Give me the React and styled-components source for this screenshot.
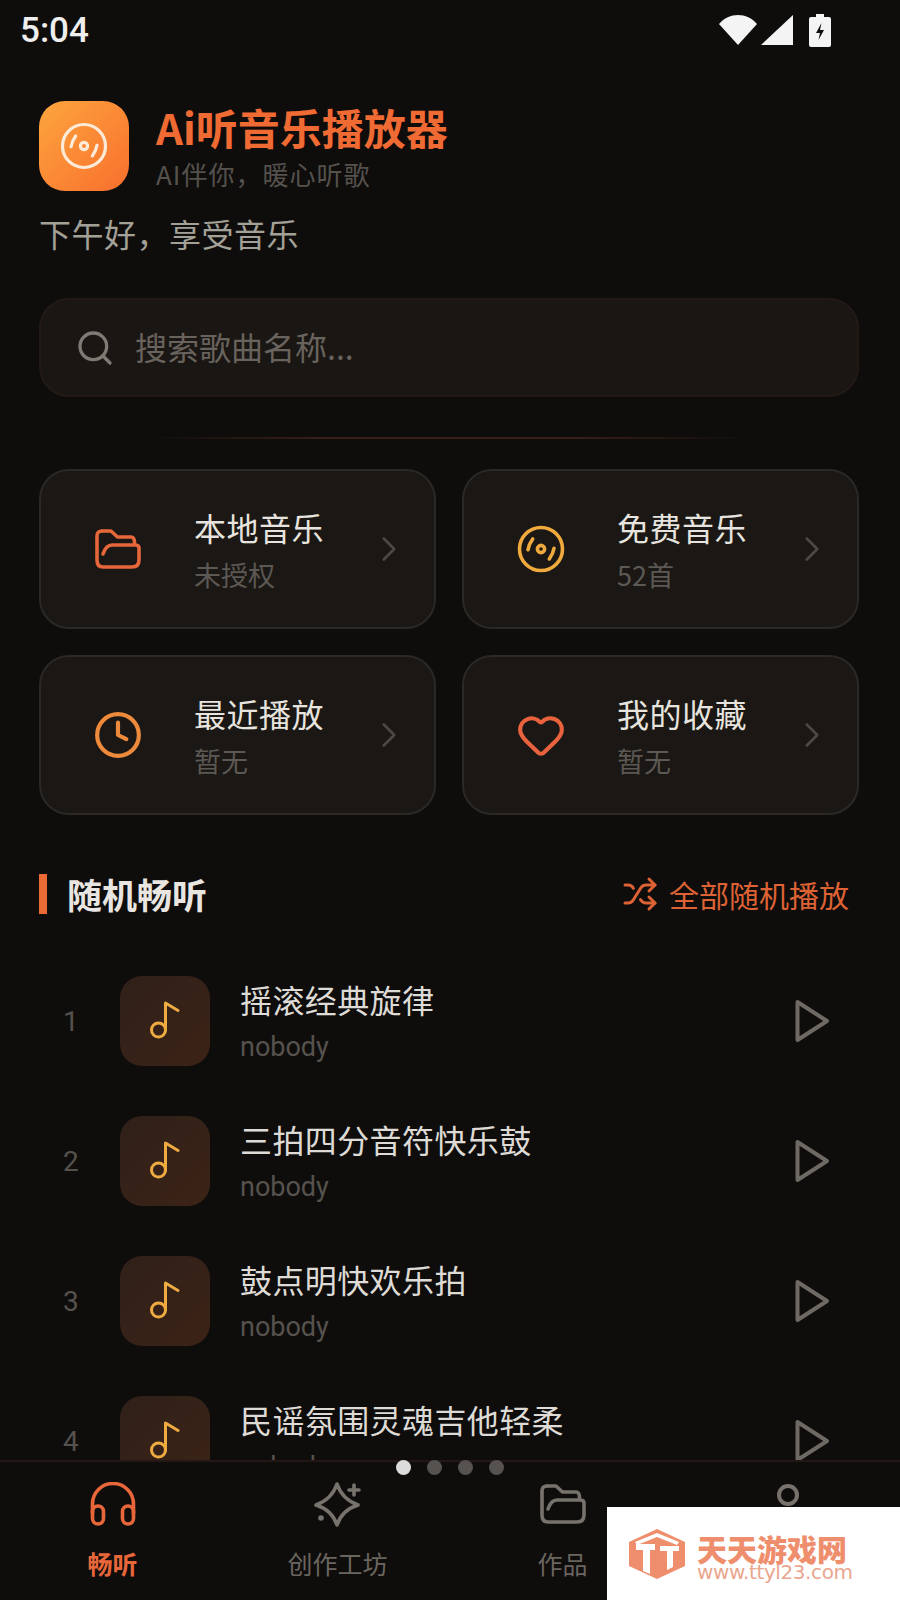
import React from 'react';
import styled, { createGlobalStyle } from 'styled-components';
import { ChevronRight, Clock, Heart, Search, Shuffle } from 'lucide-react';

const GlobalStyle = createGlobalStyle`
  html, body { margin: 0; padding: 0; background: #0e0d0c; }
  * { box-sizing: border-box; }
  body { font-family: "Noto Sans CJK SC", "Noto Sans", sans-serif; }
`;

const Page = styled.div`
  position: relative;
  width: 900px;
  height: 1600px;
  overflow: hidden;
  display: flex;
  flex-direction: column;
  background: #0e0d0c;
`;

const StatusBar = styled.div`
  height: 60px;
  flex: none;
  display: flex;
  align-items: center;
  justify-content: space-between;
  padding: 0 69px 0 20px;
`;

const Time = styled.div`
  font-family: Roboto, sans-serif;
  font-size: 35px;
  font-weight: 500;
  color: #eeeeee;
  line-height: 1;
`;

const StatusIcons = styled.div`
  display: flex;
  align-items: center;
  gap: 4px;
`;

const BatteryIcon = styled.svg`
  margin-left: 12px;
`;

const Main = styled.div`
  flex: none;
  padding: 41px 41px 0 39px;
`;

const Brand = styled.div`
  display: flex;
  align-items: center;
  gap: 27px;
`;

const LogoTile = styled.div`
  width: 90px;
  height: 90px;
  border-radius: 26px;
  background: linear-gradient(135deg, #fda53e, #f86f2d);
  display: flex;
  align-items: center;
  justify-content: center;
`;

const BrandText = styled.div`
  display: flex;
  flex-direction: column;
`;

const BrandName = styled.div`
  font-size: 42px;
  line-height: 48px;
  font-weight: 700;
  color: #f06a33;
`;

const Tagline = styled.div`
  margin-top: 7px;
  font-size: 26px;
  line-height: 32px;
  letter-spacing: 1px;
  color: #55514d;
`;

const Greeting = styled.div`
  margin-top: 22px;
  font-size: 32px;
  line-height: 40px;
  letter-spacing: 0.5px;
  color: #a3a097;
`;

const SearchBox = styled.div`
  margin-top: 45px;
  height: 99px;
  border-radius: 30px;
  border: 2px solid #231a16;
  background: #1a1613;
  display: flex;
  align-items: center;
  gap: 20px;
  padding-left: 34px;
  color: #807a74;
`;

const Placeholder = styled.div`
  margin-bottom: 4px;
  font-size: 32px;
  color: #69635d;
`;

const Divider = styled.div`
  margin: 40px auto 0;
  width: 600px;
  height: 2px;
  background: linear-gradient(90deg, transparent, #3a1f16 30%, #3a1f16 70%, transparent);
`;

const CardGrid = styled.div`
  margin-top: 30px;
  display: grid;
  grid-template-columns: 397px 397px;
  column-gap: 26px;
  row-gap: 26px;
`;

const Card = styled.div`
  height: 160px;
  border-radius: 30px;
  border: 2px solid #2b2825;
  background: #1a1714;
  display: flex;
  align-items: center;
  padding: 0 24px 0 52px;
`;

const CardIcon = styled.div`
  width: 50px;
  flex: none;
  display: flex;
  justify-content: center;
  color: ${(p) => p.$color};
`;

const CardText = styled.div`
  margin-left: 51px;
  flex: 1;
`;

const CardTitle = styled.div`
  font-size: 32px;
  line-height: 44px;
  letter-spacing: 0.5px;
  color: #e7e4df;
`;

const CardSub = styled.div`
  margin-top: 8px;
  font-size: 27px;
  line-height: 36px;
  color: #5c5853;
`;

const CardArrow = styled.div`
  display: flex;
  color: #4c4844;
`;

const SectionHead = styled.div`
  margin-top: 57px;
  display: flex;
  align-items: center;
  justify-content: space-between;
  padding-right: 10px;
`;

const SectionTitle = styled.div`
  display: flex;
  align-items: center;
  gap: 20px;
  font-size: 35px;
  line-height: 40px;
  font-weight: 700;
  color: #e9e6e2;
  &::before {
    content: "";
    width: 8px;
    height: 40px;
    background: #ec6a36;
  }
`;

const ShuffleAll = styled.div`
  display: flex;
  align-items: center;
  gap: 11px;
  font-size: 30px;
  color: #dd6234;
`;

const SongList = styled.div`
  margin-top: 60px;
  flex: 1;
  min-height: 0;
  overflow: hidden;
  padding: 0 70px 0 39px;
`;

const SongRow = styled.div`
  height: 90px;
  margin-bottom: 50px;
  display: flex;
  align-items: center;
`;

const SongNo = styled.div`
  width: 81px;
  padding-left: 24px;
  font-family: Roboto, sans-serif;
  font-size: 28px;
  color: #55514c;
`;

const SongTile = styled.div`
  width: 90px;
  height: 90px;
  flex: none;
  border-radius: 22px;
  background: linear-gradient(135deg, #2f2019, #3c2316);
  display: flex;
  align-items: center;
  justify-content: center;
  color: #eeab42;
`;

const SongText = styled.div`
  flex: 1;
  margin-left: 30px;
  align-self: flex-start;
`;

const SongTitle = styled.div`
  margin-top: -2px;
  font-size: 32px;
  line-height: 50px;
  letter-spacing: 0.4px;
  color: #dedbd6;
`;

const SongArtist = styled.div`
  margin-top: 3px;
  font-family: Roboto, sans-serif;
  font-size: 27px;
  line-height: 40px;
  color: #56524d;
`;

const PlayBtn = styled.div`
  display: flex;
  color: #6e6963;
`;

const BottomBar = styled.div`
  position: relative;
  flex: none;
  height: 140px;
  border-top: 2px solid #241815;
  background: #0f0d0c;
  display: grid;
  grid-template-columns: repeat(4, 225px);
`;

const Dots = styled.div`
  position: absolute;
  left: 396px;
  top: -2px;
  display: flex;
  gap: 16px;
`;

const Dot = styled.span`
  width: 15px;
  height: 15px;
  border-radius: 50%;
  background: ${(p) => (p.$on ? '#dcdcdc' : '#55524f')};
`;

const Tab = styled.div`
  display: flex;
  flex-direction: column;
  align-items: center;
  padding-top: 16px;
  color: ${(p) => (p.$on ? '#e8673a' : '#77726c')};
`;

const TabIcon = styled.div`
  height: 52px;
  display: flex;
  align-items: center;
  justify-content: center;
`;

const TabLabel = styled.div`
  margin-top: 16px;
  font-size: 25px;
  line-height: 34px;
  font-weight: ${(p) => (p.$on ? 700 : 400)};
  color: ${(p) => (p.$on ? '#e8673a' : '#6a655f')};
`;

const Watermark = styled.div`
  position: absolute;
  right: 0;
  bottom: 0;
  width: 293px;
  height: 93px;
  background: #ffffff;
  display: flex;
  align-items: center;
  gap: 12px;
  padding-left: 22px;
  color: #ee8e6c;
`;

const WatermarkText = styled.div`
  display: flex;
  flex-direction: column;
  padding-top: 8px;
`;

const WatermarkName = styled.div`
  font-size: 30px;
  line-height: 28px;
  font-weight: 900;
`;

const WatermarkUrl = styled.div`
  font-family: "DejaVu Sans", sans-serif;
  font-size: 20px;
  line-height: 20px;
  letter-spacing: -0.4px;
  color: #e9a68e;
`;

const Disc = ({ size = 48, color = 'currentColor', sw = 3.6 }) => (
  <svg width={size} height={size} viewBox="0 0 48 48" fill="none" stroke={color} strokeWidth={sw} strokeLinecap="round">
    <circle cx="24" cy="24" r="21.5" />
    <circle cx="24" cy="24" r="3.6" />
    <path d="M15.7 14Q12 19 11 24.7M32.3 34Q36 29 37 23.3" />
  </svg>
);

const Folder = () => (
  <svg width="46" height="40" viewBox="0 0 46 40" fill="none" stroke="currentColor" strokeWidth="3.6" strokeLinejoin="round" strokeLinecap="round">
    <path d="M7 2H16L22.5 8H36Q39.5 8 39.5 14" />
    <path d="M7 2Q2 2 2 7V31Q2 38 8 38H37Q44 38 44 31V19Q44 16 40 16H17Q11 16 8 25" />
  </svg>
);

const Note = () => (
  <svg width="30" height="40" viewBox="0 0 30 40" fill="none" stroke="currentColor" strokeWidth="3" strokeLinejoin="round" strokeLinecap="round">
    <circle cx="8.5" cy="29" r="7" />
    <path d="M15.5 29V2L28 9.5" />
  </svg>
);

const PlayIcon = () => (
  <svg width="35" height="44" viewBox="0 0 35 44" fill="none" stroke="currentColor" strokeWidth="4" strokeLinejoin="round">
    <path d="M2.5 3 32 22 2.5 41z" />
  </svg>
);

const HeadphonesIcon = () => (
  <svg width="46" height="44" viewBox="0 0 46 44" fill="none" stroke="currentColor" strokeWidth="3.6">
    <path d="M2.5 32V22a20.5 20.5 0 0 1 41 0V32" />
    <rect x="2.5" y="24" width="11" height="18" rx="5.5" />
    <rect x="32.5" y="24" width="11" height="18" rx="5.5" />
  </svg>
);

const SparkleIcon = () => (
  <svg width="52" height="52" viewBox="0 0 52 52" fill="none" stroke="currentColor" strokeWidth="3.6" strokeLinejoin="round" strokeLinecap="round">
    <path d="M25 6Q30 21 46 27Q30 32 25 47Q20 32 4 27Q20 21 25 6z" />
    <path d="M42 7V17M37 12H47" />
    <circle cx="9" cy="40" r="2.8" fill="currentColor" stroke="none" />
  </svg>
);

const cards = [
  { title: '本地音乐', sub: '未授权', color: '#e5673a', icon: <Folder /> },
  { title: '免费音乐', sub: '52首', color: '#efa93c', icon: <Disc size={48} /> },
  { title: '最近播放', sub: '暂无', color: '#ee8a3c', icon: <Clock size={54} strokeWidth={2} /> },
  { title: '我的收藏', sub: '暂无', color: '#e8623e', icon: <Heart size={54} strokeWidth={2} /> },
];

const songs = ['摇滚经典旋律', '三拍四分音符快乐鼓', '鼓点明快欢乐拍', '民谣氛围灵魂吉他轻柔'];

const App = () => {
  return (
    <>
      <GlobalStyle />
      <Page>
        <StatusBar>
          <Time>5:04</Time>
          <StatusIcons>
            <svg width="38" height="30" viewBox="0 0 38 30"><path d="M0 9C5 3 12 0 19 0s14 3 19 9L19 30z" fill="#f4f4f4" /></svg>
            <svg width="32" height="30" viewBox="0 0 32 30"><path d="M32 0v30H0z" fill="#f4f4f4" /></svg>
            <BatteryIcon width="22" height="33" viewBox="0 0 22 33">
              <path d="M7 0h8v3h5a2 2 0 0 1 2 2v26a2 2 0 0 1-2 2H2a2 2 0 0 1-2-2V5a2 2 0 0 1 2-2h5z" fill="#f4f4f4" />
              <path d="M12.5 9 7 19h4l-1.5 7L15 16h-4z" fill="#0e0d0c" />
            </BatteryIcon>
          </StatusIcons>
        </StatusBar>

        <Main>
          <Brand>
            <LogoTile><Disc size={48} color="#fdebd8" sw={3.2} /></LogoTile>
            <BrandText>
              <BrandName>Ai听音乐播放器</BrandName>
              <Tagline>AI伴你，暖心听歌</Tagline>
            </BrandText>
          </Brand>
          <Greeting>下午好，享受音乐</Greeting>
          <SearchBox>
            <Search size={40} strokeWidth={2} />
            <Placeholder>搜索歌曲名称...</Placeholder>
          </SearchBox>
          <Divider />
          <CardGrid>
            {cards.map((c) => (
              <Card key={c.title}>
                <CardIcon $color={c.color}>{c.icon}</CardIcon>
                <CardText>
                  <CardTitle>{c.title}</CardTitle>
                  <CardSub>{c.sub}</CardSub>
                </CardText>
                <CardArrow><ChevronRight size={42} strokeWidth={1.5} /></CardArrow>
              </Card>
            ))}
          </CardGrid>
          <SectionHead>
            <SectionTitle>随机畅听</SectionTitle>
            <ShuffleAll><Shuffle size={36} strokeWidth={2} />全部随机播放</ShuffleAll>
          </SectionHead>
        </Main>

        <SongList>
          {songs.map((s, i) => (
            <SongRow key={s}>
              <SongNo>{i + 1}</SongNo>
              <SongTile><Note /></SongTile>
              <SongText>
                <SongTitle>{s}</SongTitle>
                <SongArtist>nobody</SongArtist>
              </SongText>
              <PlayBtn><PlayIcon /></PlayBtn>
            </SongRow>
          ))}
        </SongList>

        <BottomBar>
          <Dots>
            <Dot $on />
            <Dot />
            <Dot />
            <Dot />
          </Dots>
          <Tab $on>
            <TabIcon><HeadphonesIcon /></TabIcon>
            <TabLabel $on>畅听</TabLabel>
          </Tab>
          <Tab>
            <TabIcon><SparkleIcon /></TabIcon>
            <TabLabel>创作工坊</TabLabel>
          </Tab>
          <Tab>
            <TabIcon><Folder /></TabIcon>
            <TabLabel>作品</TabLabel>
          </Tab>
          <Tab>
            <TabIcon>
              <svg width="52" height="52" viewBox="0 0 52 52" fill="none" stroke="currentColor" strokeWidth="4">
                <circle cx="26" cy="17" r="9" />
              </svg>
            </TabIcon>
          </Tab>
        </BottomBar>

        <Watermark>
          <svg width="56" height="50" viewBox="0 0 56 50">
            <path d="M28 0 56 13v24L28 50 0 37V13z" fill="#ee8e6c" />
            <path d="M6 13 28 4l22 9-2 3L28 8 8 16z" fill="#fff" />
            <path d="M7 15H26V21H21V45L14 42V21H7zM31 17H50V22H44V38L38 41V22H31z" fill="#fff" />
          </svg>
          <WatermarkText>
            <WatermarkName>天天游戏网</WatermarkName>
            <WatermarkUrl>www.ttyl23.com</WatermarkUrl>
          </WatermarkText>
        </Watermark>
      </Page>
    </>
  );
};

export default App;
